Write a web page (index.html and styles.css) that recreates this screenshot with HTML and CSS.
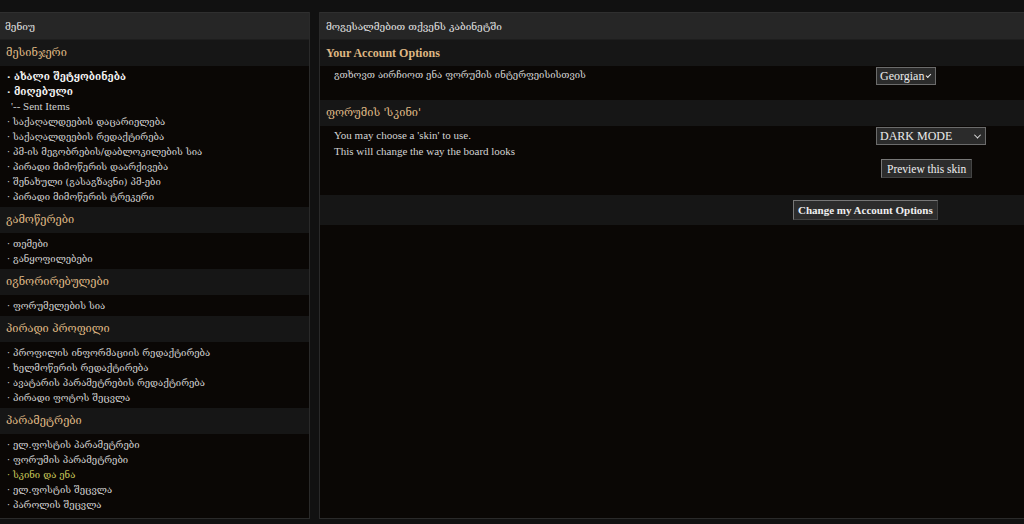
FILE: index.html
```html
<!DOCTYPE html>
<html lang="ka">
<head>
<meta charset="utf-8">
<title>UCP</title>
<link rel="stylesheet" href="styles.css">
</head>
<body>
<div class="page">
  <aside class="menu">
    <div class="title">მენიუ</div>
    <div class="sec-head">მესინჯერი</div>
    <ul class="items">
      <li class="strong">· ახალი შეტყობინება</li>
      <li class="strong">· მიღებული</li>
      <li class="sub">'-- Sent Items</li>
      <li>· საქაღალდეების დაცარიელება</li>
      <li>· საქაღალდეების რედაქტირება</li>
      <li>· პმ-ის მეგობრების/დაბლოკილების სია</li>
      <li>· პირადი მიმოწერის დაარქივება</li>
      <li>· შენახული (გასაგზავნი) პმ-ები</li>
      <li>· პირადი მიმოწერის ტრეკერი</li>
    </ul>
    <div class="sec-head">გამოწერები</div>
    <ul class="items">
      <li>· თემები</li>
      <li>· განყოფილებები</li>
    </ul>
    <div class="sec-head">იგნორირებულები</div>
    <ul class="items">
      <li>· ფორუმელების სია</li>
    </ul>
    <div class="sec-head">პირადი პროფილი</div>
    <ul class="items">
      <li>· პროფილის ინფორმაციის რედაქტირება</li>
      <li>· ხელმოწერის რედაქტირება</li>
      <li>· ავატარის პარამეტრების რედაქტირება</li>
      <li>· პირადი ფოტოს შეცვლა</li>
    </ul>
    <div class="sec-head">პარამეტრები</div>
    <ul class="items">
      <li>· ელ.ფოსტის პარამეტრები</li>
      <li>· ფორუმის პარამეტრები</li>
      <li class="active">· სკინი და ენა</li>
      <li>· ელ.ფოსტის შეცვლა</li>
      <li>· პაროლის შეცვლა</li>
    </ul>
  </aside>
  <main class="main">
    <div class="title">მოგესალმებით თქვენს კაბინეტში</div>
    <div class="sec-head latin">Your Account Options</div>
    <div class="row row-lang">
      <div class="cell-l">გთხოვთ აირჩიოთ ენა ფორუმის ინტერფეისისთვის</div>
      <div class="cell-r">
        <span class="select sel-lang">Georgian <span class="chev"></span></span>
      </div>
    </div>
    <div class="sec-head">ფორუმის 'სკინი'</div>
    <div class="row row-skin">
      <div class="cell-l">
        <div>You may choose a 'skin' to use.</div>
        <div>This will change the way the board looks</div>
      </div>
      <div class="cell-r">
        <span class="select sel-skin">DARK MODE <span class="chev"></span></span>
        <button class="btn btn-preview" type="button">Preview this skin</button>
      </div>
    </div>
    <div class="submit-row">
      <button class="btn btn-submit" type="button">Change my Account Options</button>
    </div>
    <div class="filler"></div>
  </main>
</div>
</body>
</html>
```
FILE: styles.css
```css
* { box-sizing: border-box; }
html, body { margin: 0; padding: 0; }
body {
  background: #111111;
  font-family: "Liberation Serif", "DejaVu Serif", serif;
  font-size: 11px;
  color: #cfcfcf;
  width: 1024px;
  height: 524px;
  overflow: hidden;
}
.page {
  display: flex;
  gap: 9px;
  padding-top: 12px;
  height: 519px;
}
.menu {
  width: 310px;
  flex: none;
  background: #0a0705;
  border-right: 1px solid #2a2a2a;
  border-bottom: 1px solid #2a2a2a;
  display: flex;
  flex-direction: column;
}
.main {
  flex: 1;
  background: #0a0705;
  border-left: 1px solid #2a2a2a;
  border-bottom: 1px solid #2a2a2a;
  display: flex;
  flex-direction: column;
}
.title {
  height: 28px;
  line-height: 27px;
  background: #262626;
  border-top: 1px solid #2f2f2f;
  border-bottom: 1px solid #1e1e1e;
  padding-left: 5px;
  color: #e2e2e2;
  font-family: "DejaVu Serif", serif;
  font-size: 10px;
}
.main .title { padding-left: 6px; }
.sec-head {
  height: 26px;
  line-height: 26px;
  background: #161616;
  color: #dfb783;
  padding-left: 6px;
  font-family: "DejaVu Serif", serif;
  font-size: 11px;
  font-weight: normal;
}
.sec-head.latin {
  font-family: "Liberation Serif", serif;
  font-size: 12px;
  font-weight: bold;
  height: 26px;
}
.items {
  list-style: none;
  margin: 0;
  padding: 3px 0 3px 7px;
  background: #0a0705;
}
.items li {
  height: 15px;
  line-height: 15px;
  font-family: "DejaVu Serif", serif;
  font-size: 9.5px;
  color: #d2d2d2;
  white-space: nowrap;
}
.items li.strong { color: #f2f2f2; font-weight: bold; font-size: 10px; }
.items li.sub {
  font-family: "Liberation Serif", serif;
  font-size: 11px;
  padding-left: 4px;
  color: #cfcfcf;
}
.items li.active { color: #c9c85a; }
.row {
  display: flex;
  background: #0a0705;
}
.row-lang { height: 34px; }
.row-skin { height: 69px; }
.cell-l {
  flex: 1;
  padding: 1px 0 0 14px;
  font-family: "Liberation Serif", "DejaVu Serif", serif;
  font-size: 11px;
  line-height: 16px;
  color: #d4d4d4;
}
.row-lang .cell-l {
  font-family: "DejaVu Serif", serif;
  font-size: 9.5px;
  padding-top: 1px;
}
.cell-r {
  width: 148px;
  flex: none;
  display: flex;
  flex-direction: column;
  align-items: flex-start;
  padding-top: 1px;
}
.select {
  display: inline-flex;
  align-items: center;
  justify-content: space-between;
  height: 18px;
  background: #2b2b2b;
  border: 1px solid #6b6b6b;
  color: #ececec;
  font-family: "Liberation Serif", serif;
  font-size: 12px;
  padding: 0 5px 0 3px;
  white-space: nowrap;
}
.sel-lang { width: 60px; }
.sel-skin { width: 110px; }
.chev {
  width: 5px;
  height: 5px;
  border-right: 1.5px solid #e8e8e8;
  border-bottom: 1.5px solid #e8e8e8;
  transform: rotate(45deg) translate(-1px, -1px);
  margin-left: 3px;
}
.btn {
  background: #2c2c2c;
  color: #efefef;
  border: 1px solid #777;
  border-right-color: #444;
  border-bottom-color: #444;
  font-family: "Liberation Serif", serif;
  font-size: 11.5px;
  padding: 0 5px;
  height: 19px;
  white-space: nowrap;
}
.btn-preview { margin-top: 14px; margin-left: 5px; }
.submit-row {
  height: 30px;
  background: #161616;
  padding: 5px 0 0 473px;
}
.btn-submit { font-weight: bold; height: 20px; padding: 0 4px; font-size: 11px; }
.filler { flex: 1; background: #0a0705; }
```
